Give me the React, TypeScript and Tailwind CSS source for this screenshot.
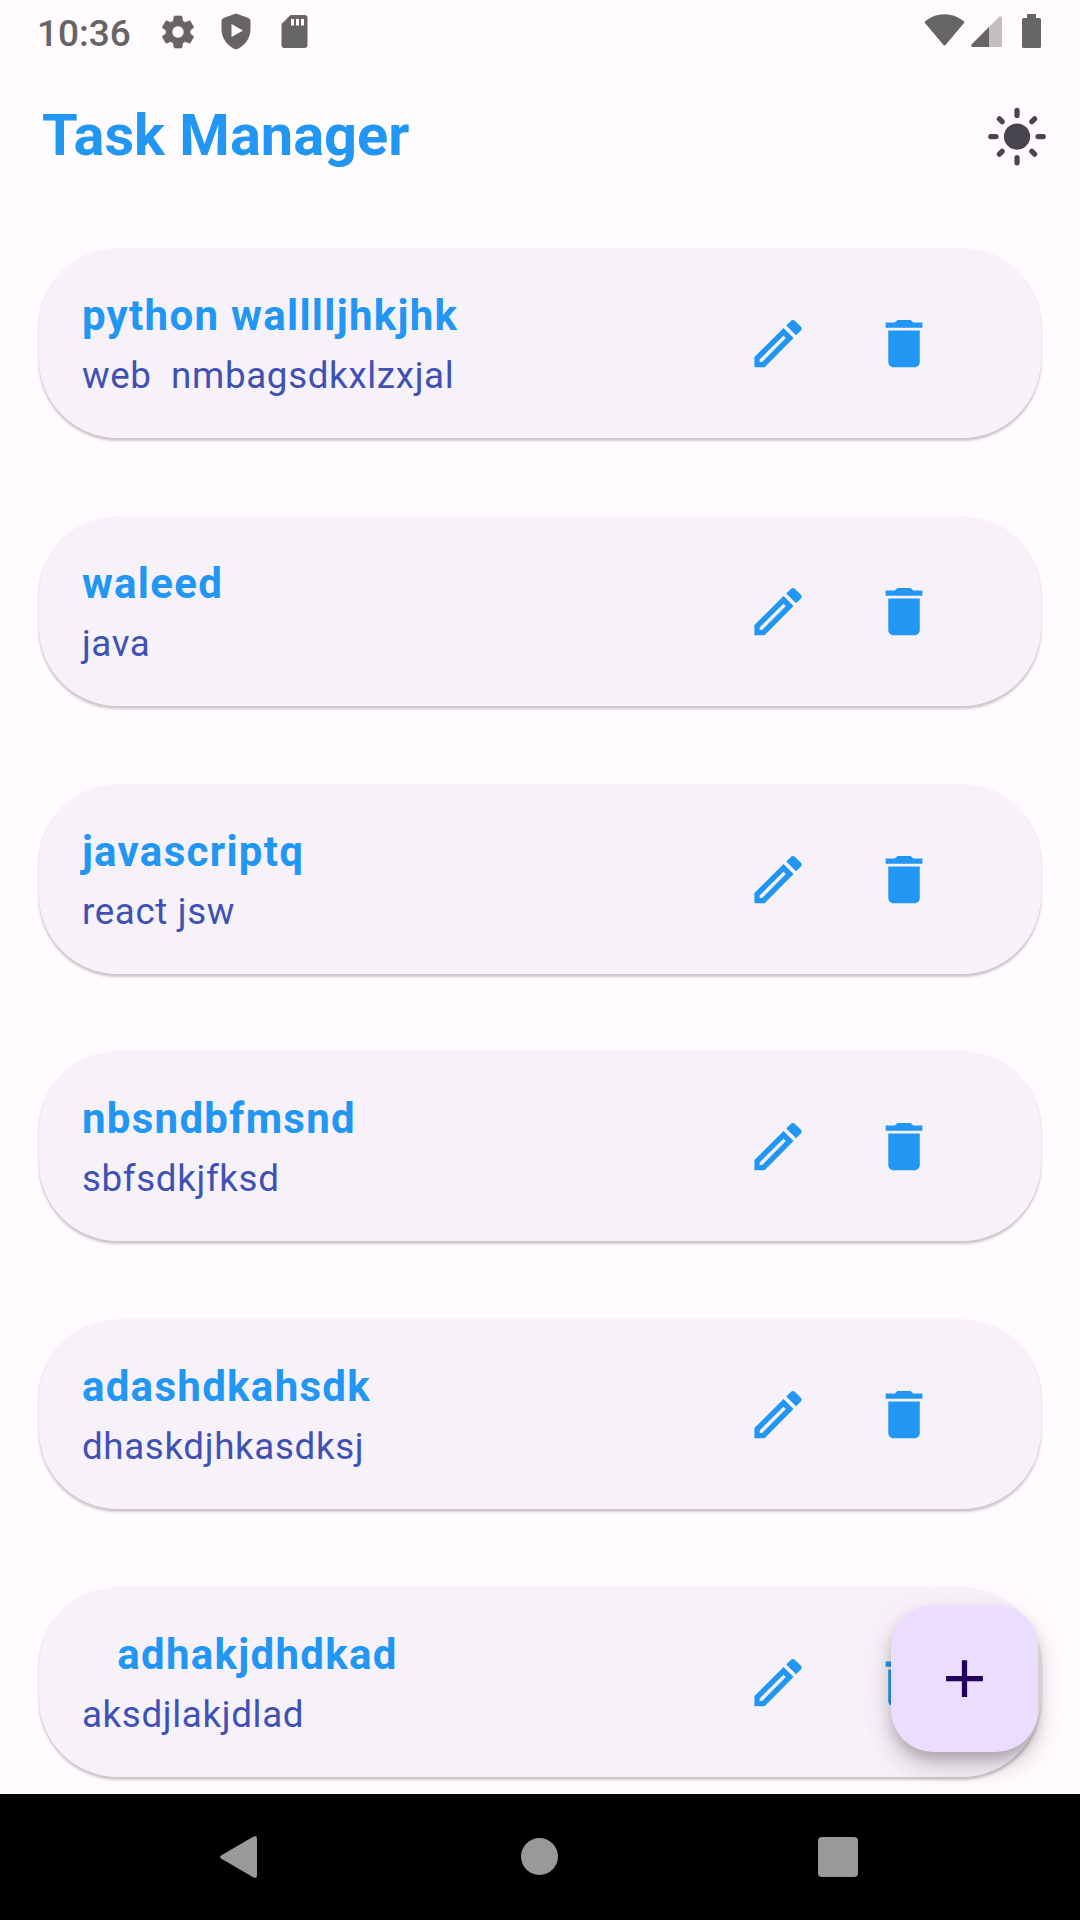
const tasks = [
  { title: "python walllljhkjhk", detail: "web  nmbagsdkxlzxjal" },
  { title: "waleed", detail: "java" },
  { title: "javascriptq", detail: "react jsw" },
  { title: "nbsndbfmsnd", detail: "sbfsdkjfksd" },
  { title: "adashdkahsdk", detail: "dhaskdjhkasdksj" },
  { title: "   adhakjdhdkad", detail: "aksdjlakjdlad" },
];

function Icon({ d, className, viewBox = "0 0 24 24" }: { d: string; className: string; viewBox?: string }) {
  return (
    <svg viewBox={viewBox} className={className} fill="currentColor" fillRule="evenodd">
      <path d={d} />
    </svg>
  );
}

const SETTINGS =
  "M19.14 12.94c.04-.3.06-.61.06-.94 0-.32-.02-.64-.07-.94l2.03-1.58c.18-.14.23-.41.12-.61l-1.92-3.32c-.12-.22-.37-.29-.59-.22l-2.39.96c-.5-.38-1.03-.7-1.62-.94l-.36-2.54c-.04-.24-.24-.41-.48-.41h-3.84c-.24 0-.43.17-.47.41l-.36 2.54c-.59.24-1.13.57-1.62.94l-2.39-.96c-.22-.08-.47 0-.59.22L2.74 8.87c-.12.21-.08.47.12.61l2.03 1.58c-.05.3-.09.63-.09.94s.02.64.07.94l-2.03 1.58c-.18.14-.23.41-.12.61l1.92 3.32c.12.22.37.29.59.22l2.39-.96c.5.38 1.03.7 1.62.94l.36 2.54c.05.24.24.41.48.41h3.84c.24 0 .44-.17.47-.41l.36-2.54c.59-.24 1.13-.56 1.62-.94l2.39.96c.22.08.47 0 .59-.22l1.92-3.32c.12-.22.07-.47-.12-.61l-2.01-1.58zM12 15.6c-1.98 0-3.6-1.62-3.6-3.6s1.62-3.6 3.6-3.6 3.6 1.62 3.6 3.6-1.62 3.6-3.6 3.6z";
const EDIT =
  "M3 17.15V21h3.9L17.91 9.94l-3.8-3.8L3 17.15zM5.92 19H5v-.92l9.06-9.06.92.92L5.92 19zM20.71 5.63l-2.34-2.34c-.2-.2-.45-.29-.71-.29s-.51.1-.7.29l-1.83 1.83 3.75 3.75 1.83-1.83c.39-.39.39-1.02 0-1.41z";
const TRASH =
  "M6 19c0 1.1.9 2 2 2h8c1.1 0 2-.9 2-2V7H6v12zM19 4h-3.5l-1-1h-5l-1 1H5v2h14V4z";

function StatusBar() {
  return (
    <div className="flex h-[63px] items-center justify-between pl-[37px] pr-[39px] text-[#666467]">
      <div className="flex items-center">
        <span className="w-[124px] pt-[3px] text-[37px] font-medium leading-none">10:36</span>
        <svg viewBox="0 0 24 24" className="-ml-[3px] h-[40px] w-[40px]" fill="currentColor" stroke="currentColor" strokeWidth="0.4">
          <path d={SETTINGS} />
        </svg>
        <svg viewBox="0 0 30 37" className="ml-[23px] h-[37px] w-[30px]" fill="currentColor" fillRule="evenodd">
          <path d="M15 0.5 27.5 5Q29.5 6 29.5 8V16C29.5 26 23 33.5 15 36.5C7 33.5 0.5 26 0.5 16V8Q0.5 6 2.5 5ZM10.5 11V24L22 17.5Z" />
        </svg>
        <svg viewBox="0 0 27 33" className="ml-[30px] h-[33px] w-[27px]" fill="currentColor" fillRule="evenodd">
          <path d="M9.5 0H23.5Q26.5 0 26.5 3V30Q26.5 33 23.5 33H3.5Q0.5 33 0.5 30V9ZM10 4V10.5H13V4ZM15 4V10.5H18V4ZM20 4V10.5H23V4Z" />
        </svg>
      </div>
      <div className="flex items-center">
        <svg viewBox="0 0 41 32" className="-mt-[3px] h-[32px] w-[41px]" fill="currentColor">
          <path d="M1.2 9.3Q0 7.8 1.7 6.8C13-1.8 28-1.8 39.3 6.8Q41 7.8 39.8 9.3L21.5 31Q20.5 32 19.5 31Z" />
        </svg>
        <svg viewBox="0 0 31 31" className="ml-[6px] h-[31px] w-[31px]" fill="currentColor">
          <path opacity="0.4" d="M18 11 28.5.5Q31-.5 31 2V29.5Q31 31 29.5 31H18Z" />
          <path d="M18 11V31H1.5Q-.5 30.5.5 28.5Z" />
        </svg>
        <svg viewBox="0 0 19 34" className="-mt-[1px] ml-[20px] h-[34px] w-[19px]" fill="currentColor">
          <path d="M5 0H14V4H17.5Q19 4 19 5.5V32.5Q19 34 17.5 34H1.5Q0 34 0 32.5V5.5Q0 4 1.5 4H5Z" />
        </svg>
      </div>
    </div>
  );
}

function TaskCard({ title, detail }: { title: string; detail: string }) {
  return (
    <div className="flex h-[189px] shrink-0 items-center justify-between rounded-[78.75px] bg-[#f7f2fa] pl-[42.5px] pr-[105.6px] shadow-[0_2.6px_2.6px_rgba(0,0,0,0.2),0_0_3px_rgba(0,0,0,0.06)]">
      <div className="whitespace-pre pb-[0.3px]">
        <div className="text-[42px] font-bold leading-[63px] tracking-[1.3125px] text-[#2196f3]">{title}</div>
        <div className="mt-[3px] text-[36.75px] leading-[52.5px] tracking-[0.65px] text-[#3f51b5]">{detail}</div>
      </div>
      <div className="flex gap-[63px] text-[#2196f3]">
        <Icon d={EDIT} viewBox="-0.2 0 24 24" className="h-[63px] w-[63px]" />
        <Icon d={TRASH} viewBox="-0.2 0 24 24" className="h-[63px] w-[63px]" />
      </div>
    </div>
  );
}

function NavBar() {
  return (
    <div className="flex h-[126px] shrink-0 items-center bg-black pb-px pl-[220px] text-[#999999]">
      <svg viewBox="0 0 38 42" className="h-[42px] w-[37px]" preserveAspectRatio="none" fill="currentColor">
        <path d="M1 19.5 34.5.5Q38-.8 38 2.5V39.5Q38 42.8 34.5 41.5L1 22.5Q-.8 21 1 19.5Z" />
      </svg>
      <div className="ml-[264px] h-[37px] w-[37px] rounded-full bg-[#999999]" />
      <div className="ml-[260px] h-[40px] w-[40px] rounded-[4px] bg-[#999999]" />
    </div>
  );
}

export default function App() {
  return (
    <div className="flex h-[1920px] w-[1080px] flex-col overflow-hidden bg-[#fffbfe] font-['Roboto',sans-serif]">
      <div className="relative flex h-[1794px] shrink-0 flex-col overflow-hidden">
        <StatusBar />
        <header className="flex h-[147px] shrink-0 items-center justify-between pl-[42px] pr-[32px]">
          <h1 className="pb-[2px] text-[57.75px] font-bold leading-none text-[#2196f3]">Task Manager</h1>
          <svg viewBox="-0.2 0 24 24" className="h-[63px] w-[63px] text-[#49454f]" fill="currentColor" stroke="currentColor" strokeWidth="2" strokeLinecap="round">
            <circle cx="12" cy="12" r="5" stroke="none" />
            <path d="M12 2v2M12 20v2M2 12h2M20 12h2M5.29 5.29l1.05 1.05M17.66 17.66l1.05 1.05M18.71 5.29l-1.05 1.05M6.34 17.66l-1.05 1.05" />
          </svg>
        </header>
        <main className="flex flex-col gap-[78.75px] px-[39.375px] pt-[39px]">
          {tasks.map((t) => (
            <TaskCard key={t.title} title={t.title} detail={t.detail} />
          ))}
        </main>
        <button className="absolute bottom-[42px] right-[42px] flex h-[147px] w-[147px] items-center justify-center rounded-[42px] bg-[#eaddff] text-[#21005d] shadow-[0_8px_13px_-2px_rgba(0,0,0,0.2),0_16px_26px_rgba(0,0,0,0.14),0_3px_40px_rgba(0,0,0,0.05)]">
          <Icon d="M19 13h-6v6h-2v-6H5v-2h6V5h2v6h6v2z" className="h-[63px] w-[63px]" />
        </button>
      </div>
      <NavBar />
    </div>
  );
}
